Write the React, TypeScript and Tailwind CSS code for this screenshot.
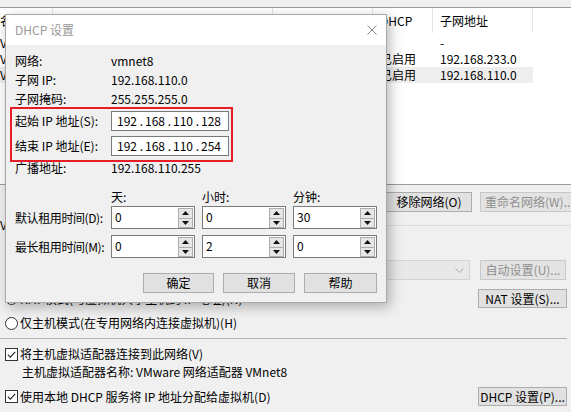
import React from 'react';

type Kids = { children?: React.ReactNode };

const Btn = ({ children, w, disabled }: Kids & { w: string; disabled?: boolean }) => (
  <div
    className={`flex h-full shrink-0 items-center justify-center whitespace-nowrap border ${w} ${
      disabled ? 'border-[#c8c8c8] bg-[#e3e3e3] text-[#8f8f8f]' : 'border-[#adadad] bg-[#e1e1e1] text-black'
    }`}
  >
    {children}
  </div>
);

const Radio = () => <span className="h-[13px] w-[13px] shrink-0 rounded-full border border-[#333333] bg-white" />;

const Check = () => (
  <span className="flex h-[13px] w-[13px] shrink-0 items-center justify-center border border-[#333333] bg-white">
    <svg viewBox="0 0 11 11" className="h-[11px] w-[11px]">
      <path d="M1.8 5.6 L4.3 8.1 L9.2 2.8" stroke="#222" strokeWidth="1.1" fill="none" />
    </svg>
  </span>
);

const Arrow = ({ down }: { down?: boolean }) => (
  <svg viewBox="0 0 7 4" className="h-[4px] w-[7px]">
    <path d={down ? 'M0 0 H7 L3.5 4 Z' : 'M0 4 H7 L3.5 0 Z'} fill="#111" />
  </svg>
);

const Spin = ({ value }: { value: string }) => (
  <div className="flex h-[23px] border border-[#7a7a7a] bg-white">
    <div className="flex-1 pl-[3px] pt-[1px] leading-[18px]">{value}</div>
    <div className="flex w-[16px] flex-col pr-[1px] pt-[1px]">
      <div className="flex flex-1 items-center justify-center border border-[#adadad] bg-[#e6e6e6]">
        <Arrow />
      </div>
      <div className="flex flex-1 items-center justify-center border border-t-0 border-[#adadad] bg-[#e6e6e6]">
        <Arrow down />
      </div>
    </div>
  </div>
);

const IpBox = ({ parts }: { parts: string[] }) => (
  <div className="flex h-[20px] w-[118px] items-center border border-[#7a7a7a] bg-white pl-[5px]">
    {parts.map((p, i) => (
      <React.Fragment key={i}>
        {i > 0 && <span className="w-[10px] pr-[2px] text-right">.</span>}
        <span className="w-[18px] text-center">{p}</span>
      </React.Fragment>
    ))}
  </div>
);

const InfoRow = ({ label, value }: { label: string; value: string }) => (
  <div className="flex h-[19px] items-center">
    <div className="w-[96px]">{label}</div>
    <div>{value}</div>
  </div>
);

const DhcpDialog = () => (
  <div className="absolute left-[5px] top-[14px] flex h-[289px] w-[382px] flex-col border border-[#a8a8a8] bg-[#f0f0f0] shadow-[3px_4px_12px_rgba(0,0,0,0.28)]">
    <div className="flex h-[30px] shrink-0 items-center justify-between bg-white pl-[9px] pr-[9px]">
      <span className="text-[#9a9a9a]">DHCP 设置</span>
      <svg viewBox="0 0 10 10" className="h-[10px] w-[10px]">
        <path d="M0.5 0.5 L9.5 9.5 M9.5 0.5 L0.5 9.5" stroke="#8a8a8a" strokeWidth="1" />
      </svg>
    </div>

    <div className="flex flex-1 flex-col pl-[9px] pr-[9px] pt-[6px]">
      <InfoRow label="网络:" value="vmnet8" />
      <InfoRow label="子网 IP:" value="192.168.110.0" />
      <InfoRow label="子网掩码:" value="255.255.255.0" />

      <div className="mt-[3px] flex h-[20px] items-center">
        <div className="w-[96px]">起始 IP 地址(S):</div>
        <IpBox parts={['192', '168', '110', '128']} />
      </div>
      <div className="mt-[5px] flex h-[20px] items-center">
        <div className="w-[96px]">结束 IP 地址(E):</div>
        <IpBox parts={['192', '168', '110', '254']} />
      </div>

      <div className="mt-[2px]">
        <InfoRow label="广播地址:" value="192.168.110.255" />
      </div>

      <div className="mt-[10px] grid h-[19px] grid-cols-[89px_84px_84px_84px] items-center gap-x-[7px]">
        <div />
        <div>天:</div>
        <div>小时:</div>
        <div>分钟:</div>
      </div>
      <div className="grid grid-cols-[89px_84px_84px_84px] items-center gap-x-[7px]">
        <div className="whitespace-nowrap tracking-[-0.4px]">默认租用时间(D):</div>
        <Spin value="0" />
        <Spin value="0" />
        <Spin value="30" />
      </div>
      <div className="mt-[6px] grid grid-cols-[89px_84px_84px_84px] items-center gap-x-[7px]">
        <div className="whitespace-nowrap tracking-[-0.4px]">最长租用时间(M):</div>
        <Spin value="0" />
        <Spin value="2" />
        <Spin value="0" />
      </div>

      <div className="mt-[15px] flex h-[20px] justify-end gap-[9px]">
        <Btn w="w-[71px]">确定</Btn>
        <Btn w="w-[72px]">取消</Btn>
        <Btn w="w-[73px]">帮助</Btn>
      </div>
    </div>

    {/* annotation drawn over the dialog */}
    <div className="absolute left-[4px] top-[92px] h-[55px] w-[223px] border-2 border-[#e81c24]" />
  </div>
);

const cols = ['w-[53px]', 'w-[220px]', 'w-[100px]', 'w-[60px]', 'w-[100px]'];
const header = ['名称', '类型', '主机连接', 'DHCP', '子网地址'];
const rows = [
  ['VMnet0', '桥接模式', '-', '-', '-'],
  ['VMnet1', '仅主机模式', '已连接', '已启用', '192.168.233.0'],
  ['VMnet8', 'NAT 模式', '已连接', '已启用', '192.168.110.0'],
];

export default function App() {
  return (
    <div className="relative h-[412px] w-[571px] overflow-hidden bg-[#f0f0f0] font-['Noto_Sans_CJK_SC','Noto_Sans',sans-serif] text-[12px] leading-[16px] text-black">
      <div className="pt-[7px]">
        <div className="h-[178px] border-y border-[#9c9c9c] bg-white">
          <div className="flex h-[25px]">
            {header.map((h, i) => (
              <div key={h} className={`${cols[i]} flex items-center border-r border-[#e5e5e5] ${i === 0 ? 'pl-0' : 'pl-[7px]'}`}>
                {h}
              </div>
            ))}
          </div>
          <div className="mt-[2px] flex flex-col">
            {rows.map((r, ri) => (
              <div key={ri} className="flex h-[16px]">
                <div className={`flex ${ri === 2 ? 'bg-[#eeeeee]' : ''}`}>
                  {r.map((c, i) => (
                    <div key={i} className={`${cols[i]} flex items-center whitespace-nowrap ${i === 0 ? 'pl-0' : 'pl-[7px]'}`}>
                      {c}
                    </div>
                  ))}
                </div>
              </div>
            ))}
          </div>
        </div>
      </div>

      <div className="ml-[292px] mt-[7px] flex h-[20px] gap-[8px]">
        <Btn w="w-[86px]">添加网络(E)...</Btn>
        <Btn w="w-[86px]">移除网络(O)</Btn>
        <Btn w="w-[100px] justify-start pl-[4px]" disabled>
          重命名网络(W)...
        </Btn>
      </div>

      <div className="mt-[6px] flex h-[14px] items-center">
        <span>VMnet 信息</span>
        <div className="ml-[4px] h-px flex-1 bg-[#dcdcdc]" />
      </div>

      <div className="mt-[4px] flex h-[15px] items-center gap-[2px] pl-[5px]">
        <Radio />
        <span>桥接模式(将虚拟机直接连接到外部网络)(B)</span>
      </div>

      <div className="mt-[9px] flex h-[20px] items-center pl-[22px]">
        <span className="w-[78px]">已桥接至(G):</span>
        <div className="flex h-full w-[370px] items-center justify-end border border-[#d4d4d4] bg-[#e8e8e8] pr-[5px]">
          <svg viewBox="0 0 9 5" className="h-[5px] w-[9px]">
            <path d="M0.5 0.5 L4.5 4.5 L8.5 0.5" stroke="#a8a8a8" strokeWidth="1" fill="none" />
          </svg>
        </div>
        <div className="ml-[10px] h-full">
          <Btn w="w-[86px]" disabled>
            自动设置(U)...
          </Btn>
        </div>
      </div>

      <div className="mt-[9px] flex h-[19px] items-center pl-[5px] pr-[4px]">
        <Radio />
        <span className="ml-[2px] flex-1">NAT 模式(与虚拟机共享主机的 IP 地址)(N)</span>
        <Btn w="w-[89px]">NAT 设置(S)...</Btn>
      </div>

      <div className="mt-[7px] flex h-[16px] items-center gap-[2px] pl-[5px]">
        <Radio />
        <span>仅主机模式(在专用网络内连接虚拟机)(H)</span>
      </div>

      <div className="mr-[4px] mt-[7px] h-px bg-[#b4b4b4]" />

      <div className="mt-[7px] flex h-[16px] items-center gap-[2px] pl-[5px]">
        <Check />
        <span>将主机虚拟适配器连接到此网络(V)</span>
      </div>
      <div className="mt-[2px] flex h-[16px] items-center pl-[22px]">主机虚拟适配器名称: VMware 网络适配器 VMnet8</div>

      <div className="mt-[7px] flex h-[19px] items-center pl-[5px] pr-[4px]">
        <Check />
        <span className="ml-[2px] flex-1">使用本地 DHCP 服务将 IP 地址分配给虚拟机(D)</span>
        <Btn w="w-[89px]">DHCP 设置(P)...</Btn>
      </div>

      <DhcpDialog />
    </div>
  );
}
